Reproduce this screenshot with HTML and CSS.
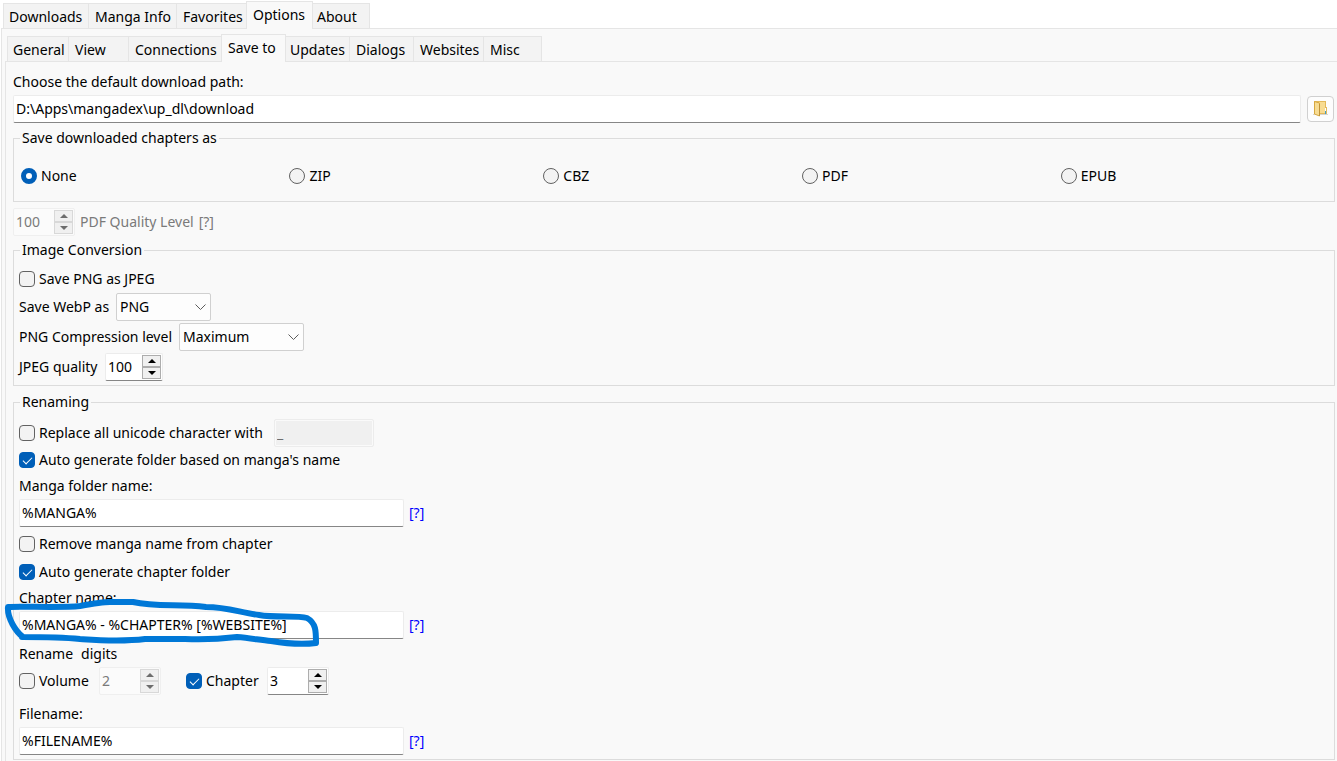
FILE: index.html
```html
<!DOCTYPE html>
<html lang="en">
<head>
<meta charset="utf-8">
<title>Options</title>
<link rel="stylesheet" href="styles.css">
</head>
<body>
<nav class="tabs main-tabs" aria-label="Main">
  <button type="button" class="tab w-86">Downloads</button>
  <button type="button" class="tab w-88">Manga Info</button>
  <button type="button" class="tab w-70">Favorites</button>
  <button type="button" class="tab active w-67">Options</button>
  <button type="button" class="tab w-57">About</button>
</nav>
<main class="page">
  <nav class="tabs" aria-label="Options">
    <button type="button" class="tab w-62">General</button>
    <button type="button" class="tab w-60">View</button>
    <button type="button" class="tab w-93">Connections</button>
    <button type="button" class="tab active w-65">Save to</button>
    <button type="button" class="tab w-64">Updates</button>
    <button type="button" class="tab w-64">Dialogs</button>
    <button type="button" class="tab w-70">Websites</button>
    <button type="button" class="tab w-58">Misc</button>
  </nav>
  <form class="sheet">
    <label class="path-label" for="path">Choose the default download path:</label>
    <div class="path-row">
      <input class="text" id="path" type="text" value="D:\Apps\mangadex\up_dl\download">
      <button class="browse" type="button" aria-label="Browse">
        <svg width="16" height="18" viewBox="0 0 16 18">
          <path d="M0 14h15v1H0z" fill="#d8d4cc"/>
          <path d="M1 1h12v13H1z" fill="#e3b95a"/>
          <path d="M6 2h6v11H6z" fill="#f8dc92"/>
          <path d="M12 7h2v7h-2z" fill="#e3b95a"/>
          <path d="M12 8h1v3h-1z" fill="#fff"/>
          <path d="M12 11h1v3h-1z" fill="#3fa0c8"/>
          <path d="M1.500 1.500l5 1.500v13l-5-2z" fill="#f7dc93" stroke="#d7a840"/>
          <path d="M6.500 4v12" stroke="#c09338"/>
        </svg>
      </button>
    </div>

    <fieldset class="group formats">
      <legend>Save downloaded chapters as</legend>
      <div class="radios">
        <label class="choice"><input type="radio" name="fmt" checked>None</label>
        <label class="choice"><input type="radio" name="fmt">ZIP</label>
        <label class="choice"><input type="radio" name="fmt">CBZ</label>
        <label class="choice"><input type="radio" name="fmt">PDF</label>
        <label class="choice"><input type="radio" name="fmt">EPUB</label>
      </div>
    </fieldset>

    <div class="line pdf-row">
      <span class="spin disabled spin-62">
        <input id="pdfq" type="text" value="100" disabled>
        <span class="steps">
          <button type="button" disabled aria-label="Increase"><svg width="8" height="4"><path d="M0 4l4-4 4 4z"/></svg></button>
          <button type="button" disabled aria-label="Decrease"><svg width="8" height="4"><path d="M0 0l4 4 4-4z"/></svg></button>
        </span>
      </span>
      <label class="muted" for="pdfq">PDF Quality Level</label>
      <span class="muted">[?]</span>
    </div>

    <fieldset class="group images">
      <legend>Image Conversion</legend>
      <label class="choice"><input type="checkbox">Save PNG as JPEG</label>
      <div class="line combo-first">
        <label class="label-webp" for="webp">Save WebP as</label>
        <span class="combo combo-95"><select id="webp"><option>PNG</option></select>
          <svg width="11" height="6"><path d="M0.500 0.500l5 5 5-5"/></svg></span>
      </div>
      <div class="line">
        <label class="label-png" for="png">PNG Compression level</label>
        <span class="combo combo-125"><select id="png"><option>Maximum</option></select>
          <svg width="11" height="6"><path d="M0.500 0.500l5 5 5-5"/></svg></span>
      </div>
      <div class="line">
        <label class="label-jpeg" for="jpeg">JPEG quality</label>
        <span class="spin spin-58">
          <input id="jpeg" type="text" value="100">
          <span class="steps">
            <button type="button" aria-label="Increase"><svg width="8" height="4"><path d="M0 4l4-4 4 4z"/></svg></button>
            <button type="button" aria-label="Decrease"><svg width="8" height="4"><path d="M0 0l4 4 4-4z"/></svg></button>
          </span>
        </span>
      </div>
    </fieldset>

    <fieldset class="group renaming">
      <legend>Renaming</legend>
      <div class="line">
        <label class="choice label-replace"><input type="checkbox">Replace all unicode character with</label>
        <input class="text filler" type="text" value="_" disabled aria-label="Replacement character">
      </div>
      <label class="choice"><input type="checkbox" checked>Auto generate folder based on manga's name</label>
      <label class="caption" for="folder">Manga folder name:</label>
      <div class="field">
        <input class="text" id="folder" type="text" value="%MANGA%"><a class="help" href="#">[?]</a>
      </div>
      <label class="choice check-remove"><input type="checkbox">Remove manga name from chapter</label>
      <label class="choice check-chapter"><input type="checkbox" checked>Auto generate chapter folder</label>
      <label class="caption" for="chapter">Chapter name:</label>
      <div class="field">
        <input class="text" id="chapter" type="text" value="%MANGA% - %CHAPTER% [%WEBSITE%]"><a class="help" href="#">[?]</a>
        <svg class="marker" width="330" height="60" viewBox="0 595 330 60">
          <path d="M23 637C16 632 7 618 8 607C20 606 62 608 80 606C91 604 102 602 110 602L133 602C155 607 178 604 206 607C228 607 241 613 259 615C276 618 297 615 307 618C316 623 316 631 316 643C300 645 283 643 271 641C260 640 250 638 237 637C220 639 205 640 185 639L145 639C120 642 95 640 80 639C60 637 42 637 22 637"/>
        </svg>
      </div>
      <div class="caption digits"><span>Rename</span><span>digits</span></div>
      <div class="line digit-row">
        <label class="choice label-volume"><input type="checkbox">Volume</label>
        <span class="spin disabled spin-62">
          <input type="text" value="2" disabled aria-label="Volume digits">
          <span class="steps">
            <button type="button" disabled aria-label="Increase"><svg width="8" height="4"><path d="M0 4l4-4 4 4z"/></svg></button>
            <button type="button" disabled aria-label="Decrease"><svg width="8" height="4"><path d="M0 0l4 4 4-4z"/></svg></button>
          </span>
        </span>
        <label class="choice label-chapter"><input type="checkbox" checked>Chapter</label>
        <span class="spin spin-62">
          <input type="text" value="3" aria-label="Chapter digits">
          <span class="steps">
            <button type="button" aria-label="Increase"><svg width="8" height="4"><path d="M0 4l4-4 4 4z"/></svg></button>
            <button type="button" aria-label="Decrease"><svg width="8" height="4"><path d="M0 0l4 4 4-4z"/></svg></button>
          </span>
        </span>
      </div>
      <label class="caption filename" for="file">Filename:</label>
      <div class="field">
        <input class="text" id="file" type="text" value="%FILENAME%"><a class="help" href="#">[?]</a>
      </div>
    </fieldset>
  </form>
</main>
</body>
</html>
```
FILE: styles.css
```css
* { box-sizing: border-box; }
body {
  margin: 0;
  min-height: 100vh;
  display: flex;
  flex-direction: column;
  background: #fff;
  color: #000;
  font: 14px/20px "Noto Sans", "Open Sans", sans-serif;
}
input, select, button { font: inherit; color: inherit; margin: 0; }

.tabs { display: flex; align-items: flex-end; padding-left: 1px; }
.main-tabs { padding: 1px 0 0 3px; }
.tab {
  height: 25px;
  padding: 2px 0 0 6px;
  border: 1px solid #e5e5e5;
  border-width: 1px 1px 0 0;
  background: #f3f3f3;
  text-align: left;
  white-space: nowrap;
}
.tab:first-child { border-left-width: 1px; padding-left: 5px; }
.tab.active {
  height: 28px;
  margin: 0 0 -1px -1px;
  padding: 0 0 2px 6px;
  border-left-width: 1px;
  background: #f9f9f9;
  position: relative;
}
.tab.active + .tab { padding-left: 4px; }
.w-57 { width: 57px; }
.w-58 { width: 58px; }
.w-60 { width: 60px; }
.w-62 { width: 62px; }
.w-64 { width: 64px; }
.w-65 { width: 65px; }
.w-67 { width: 67px; }
.w-70 { width: 70px; }
.w-86 { width: 86px; }
.w-88 { width: 88px; }
.w-93 { width: 93px; }

.page {
  flex: 1;
  display: flex;
  flex-direction: column;
  margin-left: 1px;
  padding: 5px 0 0 4px;
  border: 1px solid #e5e5e5;
  border-width: 1px 0 0 1px;
  background: #f9f9f9;
}
.sheet {
  flex: 1;
  margin-left: -1px;
  padding: 10px 2px 1px 7px;
  border: 1px solid #e5e5e5;
  border-width: 1px 0 0 1px;
}
.path-label { display: block; }
.path-row { display: flex; align-items: center; gap: 6px; margin-top: 3px; }
.text {
  height: 28px;
  padding: 0 2px 1px;
  border: 1px solid #ececec;
  border-bottom-color: #868686;
  border-radius: 2px;
  background: #fff;
  min-width: 0;
}
.path-row .text { flex: 1; }
.browse {
  display: grid;
  place-items: center;
  width: 27px;
  height: 26px;
  margin-right: 1px;
  padding: 0;
  border: 1px solid #d0d0d0;
  border-radius: 4px;
  background: #fdfdfd;
}

.group { margin: 5px 0 0; min-width: 0; border: 1px solid #dcdcdc; padding: 0 5px 4px; }
.group legend { margin-left: 1px; padding: 0 2px; height: 20px; }
.radios { display: flex; justify-content: space-between; padding: 18px 0 11px 2px; }
.radios::after { content: ""; }
.choice { display: flex; align-items: center; gap: 4px; white-space: nowrap; }
.choice input {
  appearance: none;
  flex: none;
  width: 16px;
  height: 16px;
  border: 1px solid #626262;
  border-radius: 4px;
  background: #f3f3f3;
}
.choice input[type="radio"] { border-radius: 50%; }
.choice input[type="radio"]:checked { border: 5px solid #005fb8; background: #fff; }
.choice input[type="checkbox"]:checked {
  display: grid;
  place-items: center;
  border-color: #005fb8;
  background: #005fb8;
}
.choice input[type="checkbox"]:checked::before {
  content: "";
  width: 8px;
  height: 4px;
  margin-bottom: 2px;
  border: solid #fff;
  border-width: 0 0 1px 1px;
  transform: rotate(-45deg);
}

.line { display: flex; align-items: center; min-height: 28px; white-space: nowrap; }
.pdf-row { gap: 5px; margin-top: 6px; }
.muted { color: #7a7a7a; }

.spin {
  display: flex;
  height: 28px;
  border: 1px solid #ececec;
  border-bottom-color: #868686;
  border-radius: 2px;
  background: #fff;
}
.spin input { flex: 1; width: 0; min-width: 0; padding: 0 0 1px 2px; border: 0; background: none; }
.spin-58 { width: 58px; }
.spin-62 { width: 62px; }
.steps { display: flex; flex-direction: column; width: 20px; padding: 1px 1px 1px 0; }
.steps button {
  flex: 1;
  display: grid;
  place-items: center;
  padding: 0;
  border: 1px solid #adadad;
  background: #f0f0f0;
}
.disabled { border-color: #efefef; background: #fbfbfb; }
.disabled input { color: #7a7a7a; }
.disabled .steps button { border-color: #d8d8d8; }
.disabled .steps svg { fill: #6d6d6d; }

.combo { display: grid; align-items: center; height: 28px; }
.combo select, .combo svg { grid-area: 1 / 1; }
.combo select {
  appearance: none;
  width: 100%;
  height: 28px;
  padding: 0 3px;
  border: 1px solid #d0d0d0;
  border-radius: 2px;
  background: #fdfdfd;
}
.combo svg { justify-self: end; margin-right: 5px; fill: none; stroke: #5c5c5c; pointer-events: none; }
.combo-95 { width: 95px; }
.combo-125 { width: 125px; }
.label-webp { width: 97px; }
.label-png { width: 160px; }
.label-jpeg { width: 86px; }
.label-replace { width: 255px; }
.label-volume { width: 80px; }
.label-chapter { width: 81px; margin-left: 25px; }

.images { margin-top: 4px; padding-top: 9px; }
.images .line { margin-top: 2px; }
.images .combo-first { margin-top: 4px; }

.renaming { margin-top: 6px; padding-top: 7px; }
.renaming > .line + .choice { margin-top: 3px; }
.filler { width: 100px; border: 1px solid #ececec; background: #f0f0f0; color: #6d6d6d; box-shadow: inset 0 0 0 1px #fafafa; }
.caption { display: block; margin: 6px 0 3px; }
.field { display: flex; align-items: center; gap: 5px; position: relative; }
.field .text { flex: 0 1 385px; }
.help { color: #00f; text-decoration: none; }
.check-remove { margin-top: 7px; }
.check-chapter { margin-top: 8px; }
.digits { display: flex; gap: 8px; margin-top: 5px; }
.filename { margin-top: 9px; }
.marker {
  position: absolute;
  left: -19px;
  top: -16px;
  fill: none;
  stroke: #0078d7;
  stroke-width: 6;
  stroke-linecap: round;
  stroke-linejoin: round;
  pointer-events: none;
}
```
